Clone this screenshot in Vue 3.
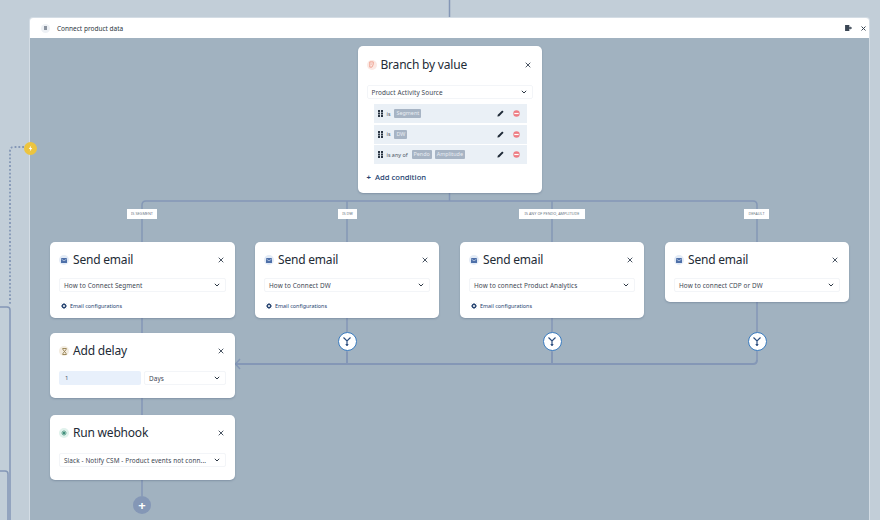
<script setup>
const emailCards = [
  { id: 'e1', x: 20, y: 204, w: 185, h: 76, select: 'How to Connect Segment', link: true },
  { id: 'e2', x: 225, y: 204, w: 184, h: 76, select: 'How to Connect DW', link: true },
  { id: 'e3', x: 430, y: 204, w: 184, h: 76, select: 'How to connect Product Analytics', link: true },
  { id: 'e4', x: 635, y: 204, w: 184, h: 60, select: 'How to connect CDP or DW', link: false }
]
const labels = [
  { t: 'IS SEGMENT', x: 97, w: 30 },
  { t: 'IS DW', x: 308, w: 19 },
  { t: 'IS ANY OF PENDO, AMPLITUDE', x: 489, w: 66 },
  { t: 'DEFAULT', x: 714, w: 25 }
]
const merges = [317, 522, 727]
const rows = [
  { op: 'is', tags: ['Segment'] },
  { op: 'is', tags: ['DW'] },
  { op: 'is any of', tags: ['Pendo', 'Amplitude'] }
]
const at = (n) => ({ left: n.x + 'px', top: n.y + 'px', width: n.w + 'px', height: n.h + 'px' })
const centre = (x) => ({ left: x - 9.5 + 'px' })
</script>

<template>
  <div class="page">
    <svg class="backlines" width="880" height="520" viewBox="0 0 880 520">
      <path d="M449.5 0V18" class="ln" />
      <path d="M24 147H14Q10 147 10 151V305" class="dots" />
      <path d="M0 307H7Q10 307 10 310V520" class="ln" />
      <path d="M0 471H5Q8 471 8 474V520" class="ln" />
    </svg>
    <span class="bolt">
      <svg width="7" height="7" viewBox="0 0 8 8"><path d="M4.8.6 2 4.5h1.8L3.2 7.4 6 3.5H4.2z" fill="#fff" /></svg>
    </span>

    <div class="window">
      <header class="bar">
        <span class="bar-icon"><i></i></span>
        <span class="bar-title">Connect product data</span>
        <svg class="exit" width="7" height="6" viewBox="0 0 8 7"><path d="M0 0h5v2.6h1.4V1.4L8 3.5 6.400 5.600V4.400H5V7H0z" fill="#3a4654" /></svg>
        <svg class="bar-x" width="5" height="5" viewBox="0 0 5 5"><path d="M.5.5l4 4M4.500.5l-4 4" stroke="#3a4654" stroke-width="1" /></svg>
      </header>

      <div class="canvas">
        <svg class="lines" width="840" height="482" viewBox="0 0 840 482">
          <path d="M419.500 155V163" class="ln" />
          <path d="M112 204V167Q112 163 116 163H723Q727 163 727 167V204" class="ln" />
          <path d="M317 163V204M522 163V204" class="ln" />
          <path d="M112 280V295M112 360V377M112 442V458" class="ln" />
          <path d="M317 280V326M522 280V326M727 264V322" class="ln" />
          <path d="M205 326H723Q727 326 727 322M317 314V326M522 314V326" class="ln wide" />
          <path d="M210 321 205.500 326 210 331" class="ln" />
        </svg>

        <span v-for="l in labels" :key="l.t" class="edge-label" :style="{ left: l.x + 'px', width: l.w + 'px' }">{{ l.t }}</span>

        <section class="card branch">
          <div class="head">
            <span class="icon peach">
              <svg width="7" height="7" viewBox="0 0 8 8"><path d="M2 1h4v3L4.500 7H2z" fill="none" stroke="#ee9b8a" stroke-width="1" /><path d="M3 3.500h2" stroke="#ee9b8a" stroke-width=".8" /></svg>
            </span>
            <h2>Branch by value</h2>
            <svg class="close" width="6" height="6" viewBox="0 0 6 6"><path d="M.7.7l4.600 4.600M5.300.7.700 5.300" stroke="#374352" stroke-width=".9" /></svg>
          </div>
          <div class="select">
            <span>Product Activity Source</span>
            <svg class="chev" width="6" height="4" viewBox="0 0 6 4"><path d="M.8.8 3 3l2.200-2.200" fill="none" stroke="#2c3744" stroke-width="1" /></svg>
          </div>
          <ul class="conditions">
            <li v-for="(r, i) in rows" :key="i" class="cond">
              <svg width="5" height="7" viewBox="0 0 5 7" class="grip"><path d="M0 0h2v2H0zM3 0h2v2H3zM0 2.500h2v2H0zM3 2.500h2v2H3zM0 5h2v2H0zM3 5h2v2H3z" fill="#2c3744" /></svg>
              <span class="op">{{ r.op }}</span>
              <span v-for="t in r.tags" :key="t" class="tag">{{ t }}</span>
              <svg class="pencil" width="7" height="7" viewBox="0 0 7 7"><path d="M5.200.4 6.600 1.800 2.200 6.200.4 6.600.8 4.800z" fill="#1f2a37" /></svg>
              <svg width="7" height="7" viewBox="0 0 7 7"><circle cx="3.500" cy="3.500" r="3.200" fill="#ee7d84" /><rect x="1.300" y="2.900" width="4.400" height="1.200" fill="#fff" /></svg>
            </li>
          </ul>
          <div class="add"><b>+</b> Add condition</div>
        </section>

        <section v-for="c in emailCards" :key="c.id" class="card node" :style="at(c)">
          <div class="head">
            <span class="icon blue">
              <svg width="6" height="5" viewBox="0 0 6 5"><rect width="6" height="5" rx=".6" fill="#4d6fa8" /><path d="M.5 1.200 3 2.800l2.500-1.600" fill="none" stroke="#e4ecf8" stroke-width=".6" /></svg>
            </span>
            <h2>Send email</h2>
            <svg class="close" width="6" height="6" viewBox="0 0 6 6"><path d="M.7.7l4.600 4.600M5.300.7.700 5.300" stroke="#374352" stroke-width=".9" /></svg>
          </div>
          <div class="select">
            <span>{{ c.select }}</span>
            <svg class="chev" width="6" height="4" viewBox="0 0 6 4"><path d="M.8.8 3 3l2.200-2.200" fill="none" stroke="#2c3744" stroke-width="1" /></svg>
          </div>
          <div v-if="c.link" class="link">
            <svg width="6" height="6" viewBox="0 0 6 6"><circle cx="3" cy="3" r="1.600" fill="none" stroke="#24426f" stroke-width="1.200" /><path d="M3 0v1M3 5v1M0 3h1M5 3h1M.9.900l.7.700M4.400 4.400l.7.700M5.100.900l-.7.700M1.600 4.400l-.7.700" stroke="#24426f" stroke-width=".9" /></svg>
            Email configurations
          </div>
        </section>

        <section class="card node delay">
          <div class="head">
            <span class="icon sand">
              <svg width="5" height="7" viewBox="0 0 5 7"><path d="M.5.500h4M.5 6.500h4M1 .5v1.200L2.500 3.500 4 1.700V.5M1 6.500V5.300l1.500-1.800L4 5.300v1.200" fill="none" stroke="#8a7440" stroke-width=".8" /></svg>
            </span>
            <h2>Add delay</h2>
            <svg class="close" width="6" height="6" viewBox="0 0 6 6"><path d="M.7.7l4.600 4.600M5.300.7.700 5.300" stroke="#374352" stroke-width=".9" /></svg>
          </div>
          <div class="delay-row">
            <div class="num">1</div>
            <div class="select">
              <span>Days</span>
              <svg class="chev" width="6" height="4" viewBox="0 0 6 4"><path d="M.8.8 3 3l2.200-2.200" fill="none" stroke="#2c3744" stroke-width="1" /></svg>
            </div>
          </div>
        </section>

        <section class="card node hook">
          <div class="head">
            <span class="icon mint">
              <svg width="6" height="6" viewBox="0 0 6 6"><circle cx="3" cy="3" r="1.500" fill="#3f8f7a" /><path d="M3 0v6M0 3h6M1 1l4 4M5 1 1 5" stroke="#3f8f7a" stroke-width=".6" /></svg>
            </span>
            <h2>Run webhook</h2>
            <svg class="close" width="6" height="6" viewBox="0 0 6 6"><path d="M.7.7l4.600 4.600M5.300.7.700 5.300" stroke="#374352" stroke-width=".9" /></svg>
          </div>
          <div class="select">
            <span>Slack - Notify CSM - Product events not conn...</span>
            <svg class="chev" width="6" height="4" viewBox="0 0 6 4"><path d="M.8.8 3 3l2.200-2.200" fill="none" stroke="#2c3744" stroke-width="1" /></svg>
          </div>
        </section>

        <span v-for="m in merges" :key="m" class="merge" :style="centre(m)">
          <svg width="10" height="11" viewBox="0 0 10 11"><path d="M1.500 1.500 5 5l3.500-3.500M5 5v5" fill="none" stroke="#2d4f80" stroke-width="1.200" /><path d="M3.200 8 5 10l1.800-2z" fill="#2d4f80" /></svg>
        </span>
        <span class="plus">+</span>
      </div>
    </div>
  </div>
</template>

<style scoped>
.page {
  position: relative;
  width: 880px;
  height: 520px;
  box-sizing: border-box;
  padding: 17px 10px 0 29px;
  overflow: hidden;
  background: #c2ced8;
  font-family: "Noto Sans", "Open Sans", sans-serif;
  color: #232d3a;
}
.backlines {
  position: absolute;
  left: 0;
  top: 0;
}
.ln {
  fill: none;
  stroke: #8497b6;
  stroke-width: 1.500;
}
.wide {
  stroke-width: 2;
}
.dots {
  fill: none;
  stroke: #8497b6;
  stroke-width: 1.800;
  stroke-dasharray: 1.800 2;
}
.bolt {
  position: absolute;
  left: 24px;
  top: 142px;
  z-index: 3;
  display: flex;
  align-items: center;
  justify-content: center;
  width: 13px;
  height: 13px;
  border-radius: 50%;
  background: #ecc43f;
}
.window {
  position: relative;
  display: flex;
  flex-direction: column;
  height: 503px;
  border: 1px solid #d4dde5;
  border-bottom: 0;
  border-radius: 4px 4px 0 0;
  overflow: hidden;
  box-sizing: border-box;
}
.bar {
  display: flex;
  align-items: center;
  flex: none;
  height: 20px;
  padding: 0 3px 0 11px;
  background: #fff;
}
.bar-icon {
  display: flex;
  align-items: center;
  justify-content: center;
  width: 9px;
  height: 9px;
  border-radius: 50%;
  background: #eef1f5;
}
.bar-icon i {
  display: block;
  width: 3px;
  height: 4px;
  background: #8b94a0;
}
.bar-title {
  margin-left: 7px;
  font-size: 6.500px;
  font-weight: 400;
  color: #2c3540;
}
.exit {
  margin-left: auto;
}
.bar-x {
  margin-left: 9px;
}
.canvas {
  position: relative;
  flex: 1;
  background: #a1b2c0;
}
.lines {
  position: absolute;
  left: 0;
  top: 0;
}
.edge-label {
  position: absolute;
  top: 171px;
  height: 10px;
  background: #fff;
  font-size: 3.800px;
  line-height: 10px;
  text-align: center;
  white-space: nowrap;
  color: #6d7785;
}
.card {
  position: absolute;
  box-sizing: border-box;
  background: #fff;
  border-radius: 5px;
  box-shadow: 0 1px 2px rgba(70, 90, 115, 0.35);
}
.node {
  padding: 0 9px;
}
.branch {
  left: 327.500px;
  top: 8px;
  width: 184px;
  height: 147px;
  padding: 0 9px;
}
.delay {
  left: 20px;
  top: 295px;
  width: 185px;
  height: 65px;
}
.hook {
  left: 20px;
  top: 377px;
  width: 185px;
  height: 65px;
}
.head {
  display: flex;
  align-items: center;
  height: 36px;
}
.icon {
  display: flex;
  align-items: center;
  justify-content: center;
  flex: none;
  width: 10px;
  height: 10px;
  border-radius: 50%;
}
.blue { background: #e3ebf6; }
.peach { background: #fbe9e4; }
.sand { background: #f3ece0; }
.mint { background: #e0f2ec; }
h2 {
  margin: 0 0 0 4px;
  font-size: 12px;
  font-weight: 400;
  letter-spacing: -0.2px;
  line-height: 16px;
  color: #232b36;
}
.close {
  margin-left: auto;
  margin-right: 2px;
}
.select {
  display: flex;
  align-items: center;
  justify-content: space-between;
  box-sizing: border-box;
  height: 14px;
  padding: 0 5px 0 4px;
  border: 1px solid #f3f5f8;
  border-radius: 2px;
  font-size: 6.400px;
  letter-spacing: 0.1px;
  white-space: nowrap;
  color: #3d4652;
}
.link {
  display: flex;
  align-items: center;
  gap: 3px;
  margin: 10px 0 0 2px;
  font-size: 5.400px;
  font-weight: 400;
  line-height: 8px;
  color: #24426f;
}
.branch .head {
  height: 37px;
}
.branch .select {
  margin-top: 2px;
}
.conditions {
  margin: 5px 6px 0 7px;
  padding: 0;
  list-style: none;
}
.cond {
  display: flex;
  align-items: center;
  gap: 3px;
  height: 19px;
  margin-bottom: 1.500px;
  padding: 0 7px 0 4px;
  background: #eaf0f6;
  font-size: 5.400px;
  color: #4b5563;
}
.grip {
  margin-right: 1px;
}
.op {
  margin-right: 1px;
}
.tag {
  padding: 0 2px;
  line-height: 9px;
  background: #a7b4c4;
  color: #e8edf2;
  border-radius: 1px;
}
.pencil {
  margin-left: auto;
  margin-right: 6px;
}
.add {
  margin-top: 8px;
  font-size: 7.700px;
  font-weight: 500;
  line-height: 11px;
  color: #24426f;
}
.add b {
  margin-right: 2px;
  font-weight: 700;
}
.delay-row {
  display: flex;
  gap: 3px;
  margin-top: 2px;
}
.num {
  flex: none;
  box-sizing: border-box;
  width: 82px;
  height: 14px;
  padding-left: 6px;
  background: #e8f0fb;
  border-radius: 2px;
  font-size: 6px;
  line-height: 14px;
  color: #4b5563;
}
.delay-row .select {
  flex: 1;
}
.hook .select {
  margin-top: 2px;
}
.merge {
  position: absolute;
  top: 294px;
  display: flex;
  align-items: center;
  justify-content: center;
  box-sizing: border-box;
  width: 19px;
  height: 19px;
  background: #fff;
  border: 1.500px solid #3a7cc0;
  border-radius: 50%;
}
.plus {
  position: absolute;
  left: 103px;
  top: 458px;
  width: 18px;
  height: 18px;
  background: #8497b6;
  border-radius: 50%;
  font-size: 13px;
  font-weight: 700;
  line-height: 18px;
  text-align: center;
  color: #fff;
}
</style>
